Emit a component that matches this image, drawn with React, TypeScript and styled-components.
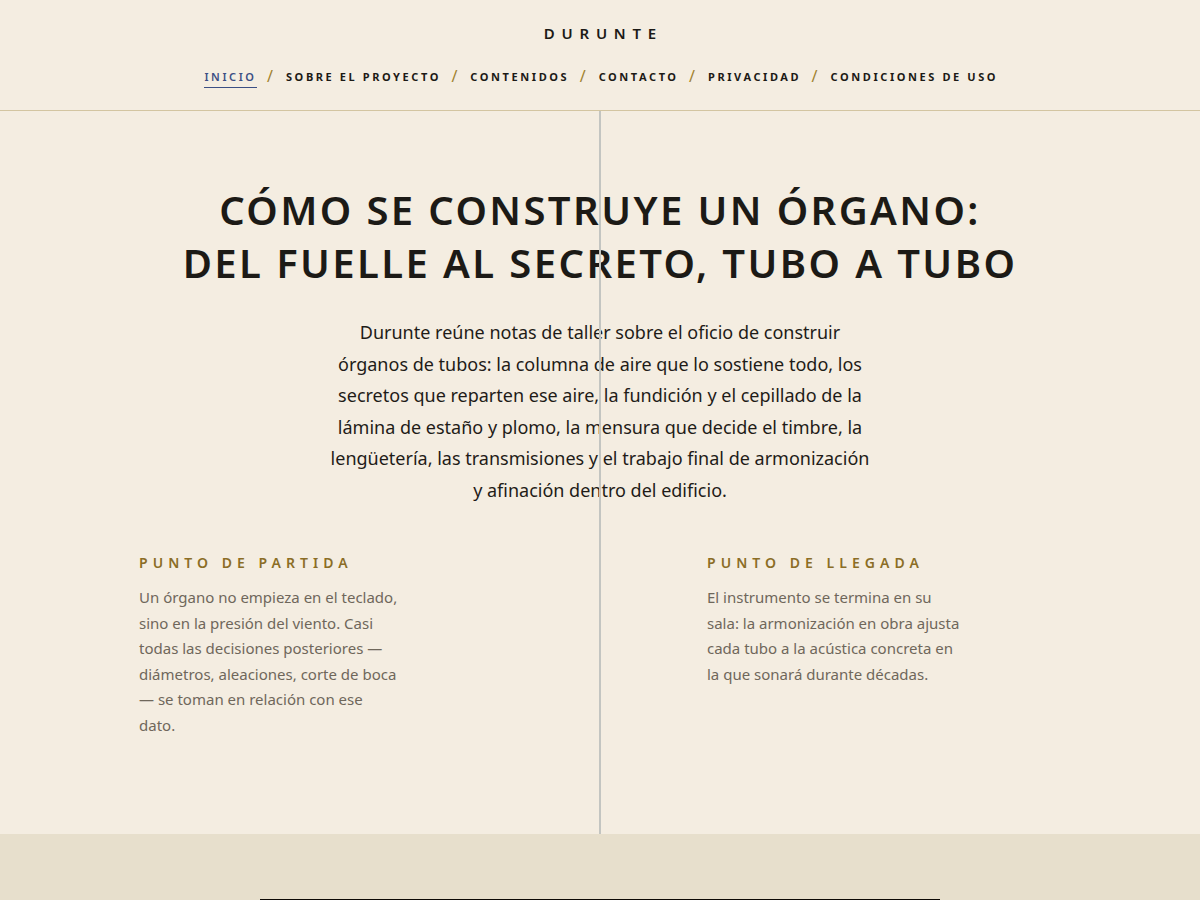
import { Fragment } from 'react';
import styled, { createGlobalStyle } from 'styled-components';

const GlobalStyle = createGlobalStyle`
  * {
    box-sizing: border-box;
  }

  body {
    margin: 0;
    background: #f4ede1;
    font-family: "Noto Sans", "Open Sans", sans-serif;
    color: #1c1a16;
  }
`;

const Header = styled.header`
  display: flex;
  flex-direction: column;
  align-items: center;
  padding: 22px 0 22px;
  border-bottom: 1px solid #d3c5a1;
`;

const Brand = styled.div`
  font-size: 15px;
  font-weight: 600;
  line-height: 22px;
  letter-spacing: 0.45em;
  margin-right: -0.45em;
  color: #1c1a16;
`;

const Nav = styled.nav`
  display: flex;
  align-items: center;
  gap: 13px;
  margin-top: 24px;
`;

const NavLink = styled.a<{ $active?: boolean }>`
  font-size: 11px;
  font-weight: ${({ $active }) => ($active ? 600 : 700)};
  letter-spacing: 0.235em;
  margin-right: -0.235em;
  line-height: 18px;
  color: ${({ $active }) => ($active ? '#3b4f84' : '#1c1a16')};
  text-decoration: none;
  padding-bottom: 1px;
  border-bottom: 1px solid ${({ $active }) => ($active ? '#3b4f84' : 'transparent')};
  cursor: pointer;
`;

const Sep = styled.span`
  color: #a0822e;
  font-size: 16px;
  line-height: 18px;
  margin-top: -4px;
`;

const Hero = styled.section`
  position: relative;
  padding: 72px 0 95px;

  &::before {
    content: '';
    position: absolute;
    top: 0;
    bottom: 0;
    left: 599px;
    width: 2px;
    background: #c3c5c1;
  }
`;

const Title = styled.h1`
  margin: 0;
  text-align: center;
  font-size: 40px;
  font-weight: 600;
  line-height: 53px;
  letter-spacing: 0.06em;
  color: #1c1a16;
`;

const Lead = styled.p`
  margin: 28px auto 0;
  max-width: 546px;
  text-align: center;
  font-size: 18px;
  line-height: 31.5px;
  color: #1f1c18;
`;

const Columns = styled.div`
  display: grid;
  grid-template-columns: 354px 354px;
  column-gap: 214px;
  padding: 0 139px;
  margin-top: 47px;
`;

const Column = styled.div`
  display: flex;
  flex-direction: column;
`;

const Label = styled.h3`
  margin: 0;
  font-size: 14px;
  font-weight: 600;
  line-height: 20px;
  letter-spacing: 0.36em;
  color: #8b6d26;
`;

const Note = styled.p`
  margin: 12px 0 0;
  max-width: 259px;
  font-size: 15px;
  line-height: 25.6px;
  color: #6f675b;
`;

const Band = styled.section`
  background: #e7dfcc;
  padding-top: 65px;
  display: flex;
  justify-content: center;
`;

const Frame = styled.div`
  width: 680px;
  height: 380px;
  background: #0d0905;
`;

export default function App() {
  const links = ['Sobre el proyecto', 'Contenidos', 'Contacto', 'Privacidad', 'Condiciones de uso'];

  return (
    <>
      <GlobalStyle />
      <Header>
        <Brand>DURUNTE</Brand>
        <Nav>
          <NavLink $active>INICIO</NavLink>
          {links.map((l) => (
            <Fragment key={l}>
              <Sep>/</Sep>
              <NavLink>{l.toUpperCase()}</NavLink>
            </Fragment>
          ))}
        </Nav>
      </Header>

      <Hero>
        <Title>
          CÓMO SE CONSTRUYE UN ÓRGANO:
          <br />
          DEL FUELLE AL SECRETO, TUBO A TUBO
        </Title>
        <Lead>
          Durunte reúne notas de taller sobre el oficio de construir órganos de tubos: la columna de
          aire que lo sostiene todo, los secretos que reparten ese aire, la fundición y el cepillado de
          la lámina de estaño y plomo, la mensura que decide el timbre, la lengüetería, las
          transmisiones y el trabajo final de armonización y afinación dentro del edificio.
        </Lead>
        <Columns>
          <Column>
            <Label>PUNTO DE PARTIDA</Label>
            <Note>
              Un órgano no empieza en el teclado, sino en la presión del viento. Casi todas las
              decisiones posteriores — diámetros, aleaciones, corte de boca — se toman en relación con
              ese dato.
            </Note>
          </Column>
          <Column>
            <Label>PUNTO DE LLEGADA</Label>
            <Note>
              El instrumento se termina en su sala: la armonización en obra ajusta cada tubo a la
              acústica concreta en la que sonará durante décadas.
            </Note>
          </Column>
        </Columns>
      </Hero>

      <Band>
        <Frame />
      </Band>
    </>
  );
}
